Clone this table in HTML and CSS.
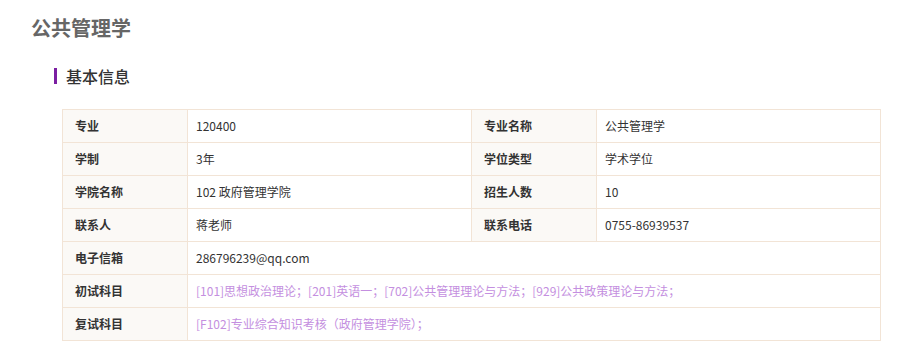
FILE: index.html
```html
<!DOCTYPE html>
<html lang="zh">
<head>
<meta charset="utf-8">
<link rel="stylesheet" href="styles.css">
</head>
<body>
<div class="page">
  <h1 class="title">公共管理学</h1>
  <h2 class="section">基本信息</h2>
  <table class="info">
    <colgroup>
      <col class="c-label"><col class="c-value"><col class="c-label"><col class="c-value">
    </colgroup>
    <tr><th>专业</th><td>120400</td><th>专业名称</th><td>公共管理学</td></tr>
    <tr><th>学制</th><td>3年</td><th>学位类型</th><td>学术学位</td></tr>
    <tr><th>学院名称</th><td>102 政府管理学院</td><th>招生人数</th><td>10</td></tr>
    <tr><th>联系人</th><td>蒋老师</td><th>联系电话</th><td>0755-86939537</td></tr>
    <tr><th>电子信箱</th><td colspan="3">286796239@qq.com</td></tr>
    <tr><th>初试科目</th><td colspan="3" class="subj">[101]思想政治理论；[201]英语一；[702]公共管理理论与方法；[929]公共政策理论与方法；</td></tr>
    <tr><th>复试科目</th><td colspan="3" class="subj">[F102]专业综合知识考核（政府管理学院）；</td></tr>
  </table>
</div>
</body>
</html>
```
FILE: styles.css
```css
html, body {
  margin: 0;
  padding: 0;
  background: #fff;
}
body {
  font-family: "Noto Sans CJK SC", "Noto Sans", sans-serif;
  color: #333;
}
.page {
  padding: 14px 0 0 31px;
}
.title {
  margin: 0;
  font-size: 20px;
  line-height: 28px;
  font-weight: bold;
  color: #666;
}
.section {
  margin: 26px 0 0 23px;
  padding-left: 9px;
  border-left: 3px solid #7b1fa2;
  font-size: 16px;
  line-height: 16px;
  font-weight: 500;
  color: #333;
}
.info {
  margin: 25px 0 0 31px;
  border-collapse: collapse;
  table-layout: fixed;
  width: 819px;
  font-size: 12px;
}
.c-label { width: 125px; }
.c-value { width: 284px; }
.info th, .info td {
  border: 1px solid #f2e4d6;
  height: 32px;
  padding: 0 8px;
  text-align: left;
  vertical-align: middle;
  line-height: 16px;
  white-space: nowrap;
}
.info th {
  background: #fbf9f6;
  font-weight: bold;
  padding-left: 12px;
  color: #333;
}
.info td.subj {
  color: #c48fe0;
}
```
